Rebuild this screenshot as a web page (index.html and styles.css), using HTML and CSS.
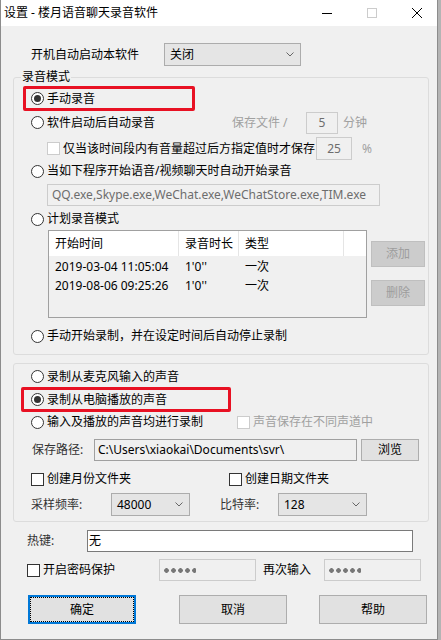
FILE: index.html
```html
<!DOCTYPE html>
<html lang="zh-CN">
<head>
  <meta charset="UTF-8">
  <title>设置 - 楼月语音聊天录音软件</title>
  <meta name="viewport" content="width=device-width, initial-scale=1.0">
  <link rel="stylesheet" href="styles.css">
</head>
<body>

  <div class="window">
    <div class="titlebar">
      <span class="title">设置 - 楼月语音聊天录音软件</span>
      <div class="caption">
        <svg width="10" height="10" viewBox="0 0 10 10"><path d="M0 5.5H10" stroke="#000" stroke-width="1"/></svg>
        <svg width="10" height="10" viewBox="0 0 10 10"><rect x="0.5" y="0.5" width="9" height="9" fill="none" stroke="#cccccc"/></svg>
        <svg width="10" height="10" viewBox="0 0 10 10"><path d="M0 0L10 10M10 0L0 10" stroke="#000" stroke-width="1"/></svg>
      </div>
    </div>

    <div class="content">
      <div class="row boot-row">
        <span class="boot-label">开机自动启动本软件</span>
        <div class="combo boot-combo">
          <span>关闭</span>
          <svg width="8" height="5" viewBox="0 0 8 5"><path d="M0.5 0.5L4 4L7.5 0.5" fill="none" stroke="#666"/></svg>
        </div>
      </div>

      <fieldset class="group mode">
        <legend>录音模式</legend>

        <div class="row highlight-box">
          <span class="radio on"><i></i>手动录音</span>
        </div>

        <div class="row indent auto-row">
          <span class="radio auto-radio"><i></i>软件启动后自动录音</span>
          <span class="muted save-label">保存文件 /</span>
          <span class="field readonly num five">5</span>
          <span class="muted minutes">分钟</span>
        </div>

        <div class="row keep-row">
          <span class="check off keep-check"><i></i>仅当该时间段内有音量超过后方指定值时才保存</span>
          <span class="field readonly num quarter">25</span>
          <span class="muted percent">%</span>
        </div>

        <div class="row indent chat-row">
          <span class="radio"><i></i>当如下程序开始语音/视频聊天时自动开始录音</span>
        </div>

        <div class="field readonly apps">QQ.exe,Skype.exe,WeChat.exe,WeChatStore.exe,TIM.exe</div>

        <div class="row indent plan-row">
          <span class="radio"><i></i>计划录音模式</span>
        </div>

        <div class="list-row">
          <div class="list">
            <div class="list-head">
              <span>开始时间</span><span>录音时长</span><span>类型</span><span></span>
            </div>
            <div class="list-body">
              <div class="list-item"><span>2019-03-04 11:05:04</span><span>1'0''</span><span>一次</span></div>
              <div class="list-item"><span>2019-08-06 09:25:26</span><span>1'0''</span><span>一次</span></div>
            </div>
          </div>
          <div class="side-buttons">
            <span class="btn disabled">添加</span>
            <span class="btn disabled">删除</span>
          </div>
        </div>

        <div class="row indent timer-row">
          <span class="radio"><i></i>手动开始录制，并在设定时间后自动停止录制</span>
        </div>
      </fieldset>

      <fieldset class="group source">
        <div class="row indent mic-row">
          <span class="radio"><i></i>录制从麦克风输入的声音</span>
        </div>

        <div class="row highlight-box">
          <span class="radio on"><i></i>录制从电脑播放的声音</span>
        </div>

        <div class="row indent both-row">
          <span class="radio both-radio"><i></i>输入及播放的声音均进行录制</span>
          <span class="check off muted"><i></i>声音保存在不同声道中</span>
        </div>

        <div class="row path-row">
          <span class="label path-label">保存路径:</span>
          <span class="field path">C:\Users\xiaokai\Documents\svr\</span>
          <span class="btn browse">浏览</span>
        </div>

        <div class="row indent folder-row">
          <span class="check month-check"><i></i>创建月份文件夹</span>
          <span class="check"><i></i>创建日期文件夹</span>
        </div>

        <div class="row indent rate-row">
          <span class="label rate-label">采样频率:</span>
          <div class="combo rate-combo">
            <span>48000</span>
            <svg width="8" height="5" viewBox="0 0 8 5"><path d="M0.5 0.5L4 4L7.5 0.5" fill="none" stroke="#666"/></svg>
          </div>
          <span class="label bit-label">比特率:</span>
          <div class="combo bit-combo">
            <span>128</span>
            <svg width="8" height="5" viewBox="0 0 8 5"><path d="M0.5 0.5L4 4L7.5 0.5" fill="none" stroke="#666"/></svg>
          </div>
        </div>
      </fieldset>

      <div class="row hotkey-row">
        <span class="label hotkey-label">热键:</span>
        <span class="field hotkey">无</span>
      </div>

      <div class="row password-row">
        <span class="check password-check"><i></i>开启密码保护</span>
        <span class="field readonly secret"><b class="dots"></b></span>
        <span class="again-label">再次输入</span>
        <span class="field readonly secret"><b class="dots"></b></span>
      </div>

      <div class="row actions">
        <span class="btn action focused">确定</span>
        <span class="btn action cancel">取消</span>
        <span class="btn action help">帮助</span>
      </div>
    </div>
  </div>

</body>
</html>
```

FILE: styles.css
```css
    :root {
      --bg: #f0f0f0;
      --frame: #8c8c8c;
      --group: #dcdcdc;
      --text: #000000;
      --label: #333333;
      --muted: #a0a0a0;
      --readonly: #6d6d6d;
      --btn: #e1e1e1;
      --btn-border: #adadad;
      --accent: #0078d7;
      --mark: #e81123;
    }

    * {
      box-sizing: border-box;
    }

    body {
      margin: 0;
      background: #b4b4b4;
      font-family: "Noto Sans", "Noto Sans CJK SC", sans-serif;
      font-size: 12px;
      line-height: 16px;
      color: var(--text);
    }

    .window {
      width: 438px;
      height: 640px;
      background: var(--bg);
      border: 1px solid var(--frame);
      border-top: none;
    }

    .titlebar {
      height: 26px;
      background: #fff;
      display: flex;
      align-items: center;
      padding-left: 3px;
    }

    .caption {
      margin-left: auto;
      margin-right: 15px;
      display: flex;
      gap: 35px;
    }

    .caption svg {
      display: block;
    }

    .row {
      display: flex;
      align-items: center;
    }

    .indent {
      margin-left: 17px;
    }

    /* controls */

    .radio,
    .check {
      display: inline-flex;
      align-items: center;
      gap: 3px;
      white-space: nowrap;
    }

    .radio i {
      width: 13px;
      height: 13px;
      border: 1px solid #333;
      border-radius: 50%;
      background: #fff;
      display: flex;
      align-items: center;
      justify-content: center;
    }

    .radio.on i::after {
      content: "";
      width: 7px;
      height: 7px;
      border-radius: 50%;
      background: #333;
    }

    .check i {
      width: 13px;
      height: 13px;
      border: 1px solid #333;
      background: #fff;
    }

    .check.off i {
      border-color: #cccccc;
    }

    .muted {
      color: var(--muted);
    }

    .label {
      color: var(--label);
    }

    .field {
      height: 22px;
      border: 1px solid #7a7a7a;
      background: #fff;
      display: flex;
      align-items: center;
      padding-left: 3px;
      white-space: nowrap;
      overflow: hidden;
    }

    .field.readonly {
      background: var(--bg);
      border-color: #cccccc;
      color: var(--readonly);
    }

    .field.num {
      justify-content: center;
      padding-left: 0;
    }

    .combo {
      height: 23px;
      background: #e5e5e5;
      border: 1px solid #acacac;
      display: flex;
      align-items: center;
      justify-content: space-between;
      padding: 0 6px 0 5px;
    }

    .btn {
      display: flex;
      align-items: center;
      justify-content: center;
      background: var(--btn);
      border: 1px solid var(--btn-border);
    }

    .btn.disabled {
      background: #cccccc;
      border-color: #bfbfbf;
      color: #9d9d9d;
    }

    .btn.focused {
      border: 2px solid var(--accent);
      outline: 1px dotted #000;
      outline-offset: -3px;
    }

    .highlight-box {
      height: 25px;
      border: 3px solid var(--mark);
      border-radius: 2px;
    }

    /* top row */

    .boot-row {
      margin-top: 17px;
      height: 23px;
      padding-left: 30px;
    }

    .boot-label {
      width: 133px;
    }

    .boot-combo {
      width: 137px;
    }

    /* group boxes */

    .group {
      margin: 0 0 0 12px;
      width: 416px;
      min-width: 0;
      padding: 0;
      border: 1px solid var(--group);
      border-radius: 3px;
    }

    .group legend {
      margin-left: 7px;
      padding: 0 1px;
      height: 16px;
      line-height: 16px;
    }

    .mode {
      margin-top: 3px;
      padding-bottom: 7px;
    }

    .mode .highlight-box {
      margin: 1px 0 0 9px;
      width: 172px;
      padding-left: 5px;
    }

    .auto-row {
      height: 23px;
    }

    .auto-radio {
      width: 201px;
    }

    .save-label {
      width: 74px;
    }

    .five {
      width: 32px;
    }

    .minutes {
      margin-left: 5px;
    }

    .keep-row {
      margin: 3px 0 0 33px;
      height: 23px;
    }

    .keep-check {
      width: 269px;
    }

    .quarter {
      width: 36px;
      height: 23px;
    }

    .percent {
      margin-left: 10px;
    }

    .chat-row {
      height: 22px;
    }

    .apps {
      margin: 2px 0 0 33px;
      width: 333px;
      padding-left: 4px;
    }

    .plan-row {
      margin-top: 2px;
      height: 22px;
    }

    .list-row {
      display: flex;
      align-items: flex-start;
    }

    .list {
      margin-left: 34px;
      width: 319px;
      height: 88px;
      border: 1px solid #a0a0a0;
      background: var(--bg);
    }

    .list-head,
    .list-item {
      display: grid;
      grid-template-columns: 130px 60px 105px 1fr;
    }

    .list-head {
      height: 25px;
      background: #fff;
    }

    .list-head span {
      line-height: 25px;
      padding-left: 6px;
      border-right: 1px solid #e5e5e5;
    }

    .list-head span:last-child {
      border-right: none;
    }

    .list-body {
      padding-top: 1px;
    }

    .list-item {
      height: 19px;
      line-height: 19px;
    }

    .list-item span {
      padding-left: 6px;
      white-space: nowrap;
    }

    .side-buttons {
      margin-left: 4px;
      padding-top: 11px;
      display: flex;
      flex-direction: column;
      gap: 13px;
    }

    .side-buttons .btn {
      width: 54px;
      height: 26px;
    }

    .timer-row {
      margin-top: 7px;
      height: 22px;
    }

    .source {
      margin-top: 8px;
      padding-bottom: 5px;
    }

    .mic-row {
      margin-top: 2px;
      height: 21px;
    }

    .source .highlight-box {
      margin-left: 7px;
      width: 210px;
      padding-left: 7px;
    }

    .both-row {
      height: 20px;
    }

    .both-radio {
      width: 206px;
    }

    .path-row {
      margin: 7px 0 0 18px;
      height: 22px;
    }

    .path-label {
      width: 62px;
    }

    .path {
      width: 263px;
      background: var(--bg);
      border-color: #a0a0a0;
    }

    .browse {
      margin-left: 4px;
      width: 58px;
      height: 22px;
    }

    .folder-row {
      margin-top: 8px;
      height: 20px;
    }

    .month-check {
      width: 198px;
    }

    .rate-row {
      margin-top: 4px;
      height: 23px;
    }

    .rate-label {
      width: 80px;
    }

    .rate-combo {
      width: 79px;
    }

    .bit-label {
      margin-left: 30px;
      width: 58px;
    }

    .bit-combo {
      width: 89px;
    }

    /* bottom rows */

    .hotkey-row {
      margin: 8px 0 0 26px;
      height: 22px;
    }

    .hotkey-label {
      width: 60px;
    }

    .hotkey {
      width: 326px;
      padding-left: 1px;
    }

    .password-row {
      margin: 7px 0 0 26px;
      height: 22px;
    }

    .password-check {
      width: 132px;
    }

    .secret {
      width: 97px;
      padding-left: 3px;
    }

    .dots {
      width: 33px;
      height: 5px;
      background: radial-gradient(circle, #777 2px, transparent 2.6px) 0 0 / 7px 5px repeat-x;
    }

    .again-label {
      margin-left: 7px;
      width: 61px;
    }

    .actions {
      margin: 14px 0 0 27px;
      height: 29px;
    }

    .action {
      width: 108px;
      height: 29px;
    }

    .cancel {
      margin-left: 43px;
    }

    .help {
      margin-left: 32px;
    }
```
